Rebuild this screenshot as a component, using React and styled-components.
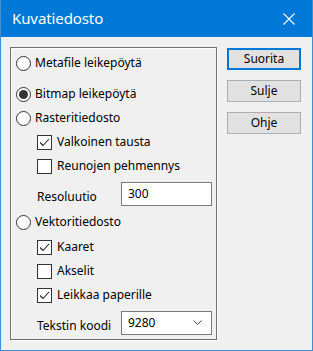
import React from "react";
import styled, { createGlobalStyle } from "styled-components";

const Global = createGlobalStyle`
  html, body { margin: 0; padding: 0; background: #f0f0f0; }
  body { font-family: "Noto Sans", "Open Sans", Arial, sans-serif; }
`;

const Window = styled.div`
  width: 313px;
  height: 351px;
  box-sizing: border-box;
  border: 1px solid #3d8fd8;
  border-top: none;
  background: #f0f0f0;
  display: flex;
  flex-direction: column;
  overflow: hidden;
`;

const TitleBar = styled.div`
  height: 37px;
  background: #0078d7;
  display: flex;
  align-items: center;
  justify-content: space-between;
  padding: 0 0 0 11px;
  flex-shrink: 0;
`;

const TitleText = styled.span`
  color: #fff;
  font-size: 15px;
  letter-spacing: -0.1px;
  margin-top: -1px;
`;

const CloseBtn = styled.div`
  width: 46px;
  height: 37px;
  display: flex;
  align-items: center;
  justify-content: center;
`;

const Body = styled.div`
  flex: 1;
  display: flex;
  padding: 10px 11px 0 9px;
  gap: 10px;
  font-size: 12px;
  color: #000;
`;

const Group = styled.div`
  width: 208px;
  height: 293px;
  box-sizing: border-box;
  border: 1px solid #a0a0a0;
  box-shadow: inset 1px 1px 0 #fff, 1px 1px 0 #fff;
  border-color: #6e6e6e;
  display: flex;
  flex-direction: column;
  padding: 3px 0 0 5px;
`;

const Row = styled.div`
  height: 24px;
  display: flex;
  align-items: center;
  margin-top: ${(p) => p.$mt || 0}px;
  padding-left: ${(p) => p.$indent || 0}px;
  white-space: nowrap;
`;

const RadioCircle = styled.span`
  width: 15px;
  height: 15px;
  box-sizing: border-box;
  border: 1px solid #333;
  border-radius: 50%;
  background: #fff;
  display: inline-flex;
  align-items: center;
  justify-content: center;
  margin-right: 4px;
  flex-shrink: 0;
  &::after {
    content: "";
    width: 9px;
    height: 9px;
    border-radius: 50%;
    background: ${(p) => (p.$on ? "#333" : "transparent")};
  }
`;

const Box = styled.span`
  width: 15px;
  height: 15px;
  box-sizing: border-box;
  border: 1px solid #333;
  background: #fff;
  display: inline-flex;
  align-items: center;
  justify-content: center;
  margin-right: 5px;
  flex-shrink: 0;
`;

const Label = styled.span`
  margin-top: -1px;
`;

const FieldLabel = styled.span`
  width: 84px;
  margin-top: 5px;
`;

const Field = styled.div`
  width: 91px;
  height: ${(p) => p.$h || 24}px;
  box-sizing: border-box;
  border: 1px solid #7a7a7a;
  background: #fff;
  display: flex;
  align-items: center;
  justify-content: space-between;
  padding: 0 9px 2px 6px;
`;

const Buttons = styled.div`
  display: flex;
  flex-direction: column;
  gap: 10px;
  padding-top: 1px;
`;

const Button = styled.div`
  width: 74px;
  height: 22px;
  box-sizing: border-box;
  background: #e1e1e1;
  border: ${(p) => (p.$def ? "2px solid #0078d7" : "1px solid #adadad")};
  display: flex;
  align-items: center;
  justify-content: center;
  font-size: 12px;
  padding-bottom: 1px;
`;

const Radio = ({ on, children, mt }) => (
  <Row $mt={mt}>
    <RadioCircle $on={on} />
    <Label>{children}</Label>
  </Row>
);

const Check = ({ on, children, mt }) => (
  <Row $mt={mt} $indent={21}>
    <Box>
      {on && (
        <svg width="11" height="9" viewBox="0 0 11 9">
          <path d="M1 4.5 L4 7.5 L10 1" fill="none" stroke="#222" strokeWidth="1.1" />
        </svg>
      )}
    </Box>
    <Label>{children}</Label>
  </Row>
);

export default function App() {
  return (
    <>
      <Global />
      <Window>
        <TitleBar>
          <TitleText>Kuvatiedosto</TitleText>
          <CloseBtn>
            <svg width="12" height="12" viewBox="0 0 12 12">
              <path d="M0.5 0.5 L11.5 11.5 M11.5 0.5 L0.5 11.5" stroke="#fff" strokeWidth="1.1" />
            </svg>
          </CloseBtn>
        </TitleBar>
        <Body>
          <Group>
            <Radio>Metafile leikepöytä</Radio>
            <Radio on mt={7}>Bitmap leikepöytä</Radio>
            <Radio>Rasteritiedosto</Radio>
            <Check on>Valkoinen tausta</Check>
            <Check>Reunojen pehmennys</Check>
            <Row $mt={4} $indent={21}>
              <FieldLabel>Resoluutio</FieldLabel>
              <Field>300</Field>
            </Row>
            <Radio mt={4}>Vektoritiedosto</Radio>
            <Check on mt={1}>Kaaret</Check>
            <Check>Akselit</Check>
            <Check on>Leikkaa paperille</Check>
            <Row $mt={4} $indent={21}>
              <FieldLabel>Tekstin koodi</FieldLabel>
              <Field>
                <span>9280</span>
                <svg width="9" height="5" viewBox="0 0 9 5">
                  <path d="M0.5 0.5 L4.5 4.5 L8.5 0.5" fill="none" stroke="#555" strokeWidth="1" />
                </svg>
              </Field>
            </Row>
          </Group>
          <Buttons>
            <Button $def>Suorita</Button>
            <Button>Sulje</Button>
            <Button>Ohje</Button>
          </Buttons>
        </Body>
      </Window>
    </>
  );
}
